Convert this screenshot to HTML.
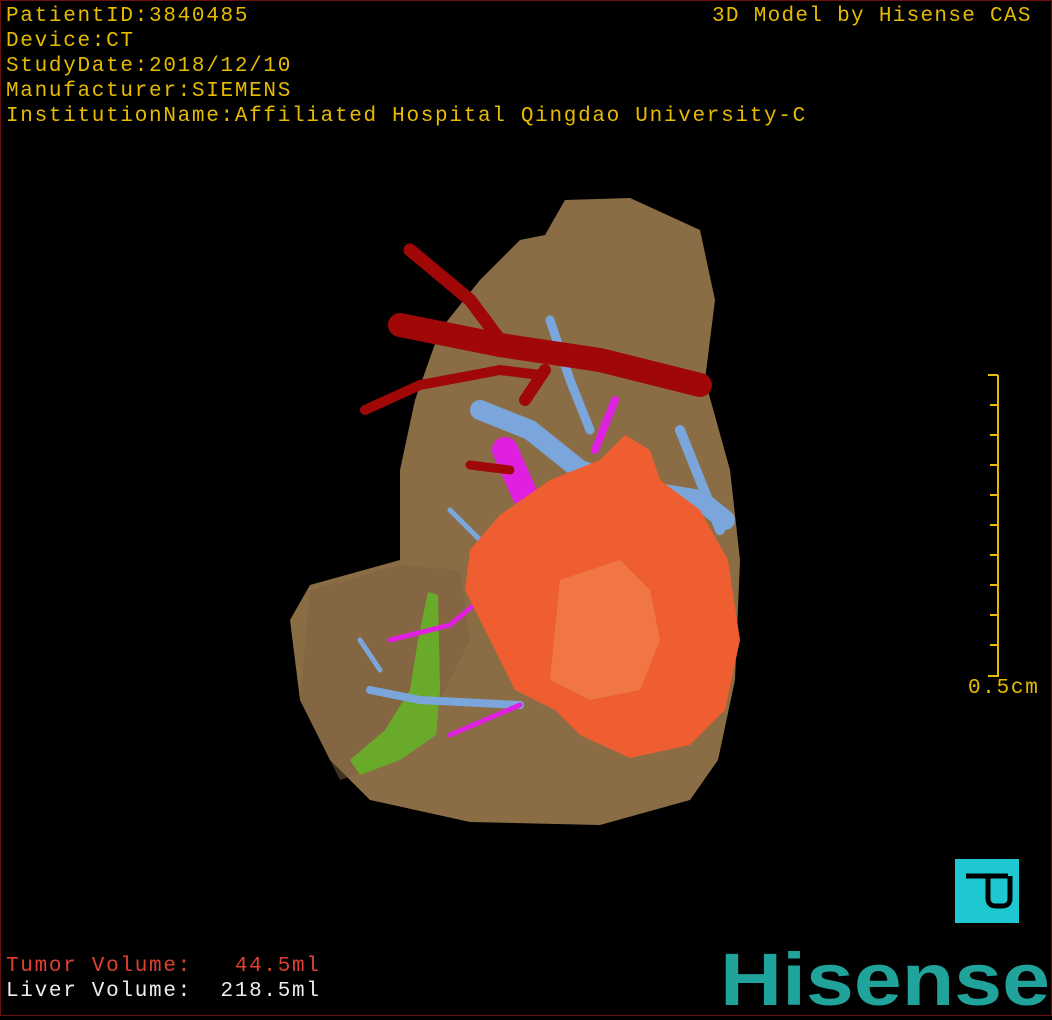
<!DOCTYPE html>
<html><head><meta charset="utf-8"><style>
html,body{margin:0;padding:0;background:#000;}
body{width:1052px;height:1020px;position:relative;overflow:hidden;}
.frame{position:absolute;left:0;top:0;width:1050px;height:1014px;border:1px solid #6a1010;}
.t{position:absolute;font-family:"Liberation Mono",monospace;font-size:21px;color:#e6bb00;white-space:pre;letter-spacing:1.7px;line-height:25px;}
svg{position:absolute;left:0;top:0;}
</style></head><body>
<div class="frame"></div>
<svg width="1052" height="1020" viewBox="0 0 1052 1020">
<path d="M565 200 L630 198 L700 230 L715 300 L705 380 L730 470 L740 560 L735 680 L718 760 L690 800 L600 825 L470 822 L370 800 L330 760 L300 700 L290 620 L310 585 L400 560 L400 470 L415 400 L440 330 L480 280 L520 240 L545 235 Z" fill="#8b6d45"/>
<path d="M310 590 L400 565 L460 570 L470 640 L440 700 L400 760 L340 780 L300 700 Z" fill="#7d6140" opacity="0.5"/>
<path d="M428 592 L438 595 L440 690 L436 735 L400 760 L360 775 L350 760 L385 730 L410 690 L418 640 Z" fill="#6aaa2a"/>
<g stroke="#7aa6dc" fill="none" stroke-linecap="round">
<path d="M480 410 L530 430 L580 470 L640 490 L700 500 L725 520" stroke-width="20"/>
<path d="M550 320 L570 380 L590 430" stroke-width="9"/>
<path d="M680 430 L700 480 L720 530" stroke-width="10"/>
<path d="M370 690 L420 700 L520 705" stroke-width="8"/>
<path d="M360 640 L380 670" stroke-width="5"/>
<path d="M450 510 L480 540" stroke-width="5"/>
</g>
<g stroke="#e020e0" fill="none" stroke-linecap="round">
<path d="M505 450 L525 495" stroke-width="26"/>
<path d="M615 400 L595 450" stroke-width="8"/>
<path d="M390 640 L450 625 L480 600" stroke-width="5"/>
<path d="M450 735 L520 705" stroke-width="5"/>
</g>
<g stroke="#a00808" fill="none" stroke-linecap="round">
<path d="M400 325 L500 345 L600 360 L700 385" stroke-width="24"/>
<path d="M410 250 L470 300 L500 340" stroke-width="13"/>
<path d="M365 410 L420 385 L500 370 L540 375" stroke-width="10"/>
<path d="M545 370 L525 400" stroke-width="12"/>
<path d="M470 465 L510 470" stroke-width="9"/>
</g>
<path d="M600 460 L625 435 L650 450 L660 480 L700 510 L728 560 L740 640 L725 710 L690 745 L630 758 L580 735 L555 710 L515 690 L490 640 L465 590 L470 550 L500 515 L550 480 Z" fill="#ee5e30"/>
<path d="M560 580 L620 560 L650 590 L660 640 L640 690 L590 700 L550 680 Z" fill="#f07c4c" opacity="0.8"/>
<g stroke="#e6bb00" stroke-width="2" fill="none">
<path d="M998 375 L998 676 L988 676"/>
<path d="M988 375 L998 375 M990 405 L998 405 M990 435 L998 435 M990 465 L998 465 M990 495 L998 495 M990 525 L998 525 M990 555 L998 555 M990 585 L998 585 M990 615 L998 615 M990 645 L998 645"/>
</g>
<rect x="955" y="859" width="64" height="64" fill="#1ec8d0"/>
<path d="M966 876 L1008 876 M988 876 L988 898 Q988 906 996 906 L1002 906 Q1010 906 1010 898 L1010 876" stroke="#000" stroke-width="5" fill="none"/>
<text x="720" y="1005" font-family="Liberation Sans, sans-serif" font-weight="bold" font-size="74" fill="#1fa39a" textLength="330" lengthAdjust="spacingAndGlyphs">Hisense</text>
</svg>
<div class="t" style="left:6px;top:4px;">PatientID:3840485
Device:CT
StudyDate:2018/12/10
Manufacturer:SIEMENS
InstitutionName:Affiliated Hospital Qingdao University-C</div>
<div class="t" style="left:712px;top:4px;letter-spacing:1.3px;">3D Model by Hisense CAS</div>
<div class="t" style="left:968px;top:676px;">0.5cm</div>
<div class="t" style="left:6px;top:954px;color:#e04030;">Tumor Volume:   44.5ml</div>
<div class="t" style="left:6px;top:979px;color:#eee;">Liver Volume:  218.5ml</div>
</body></html>
